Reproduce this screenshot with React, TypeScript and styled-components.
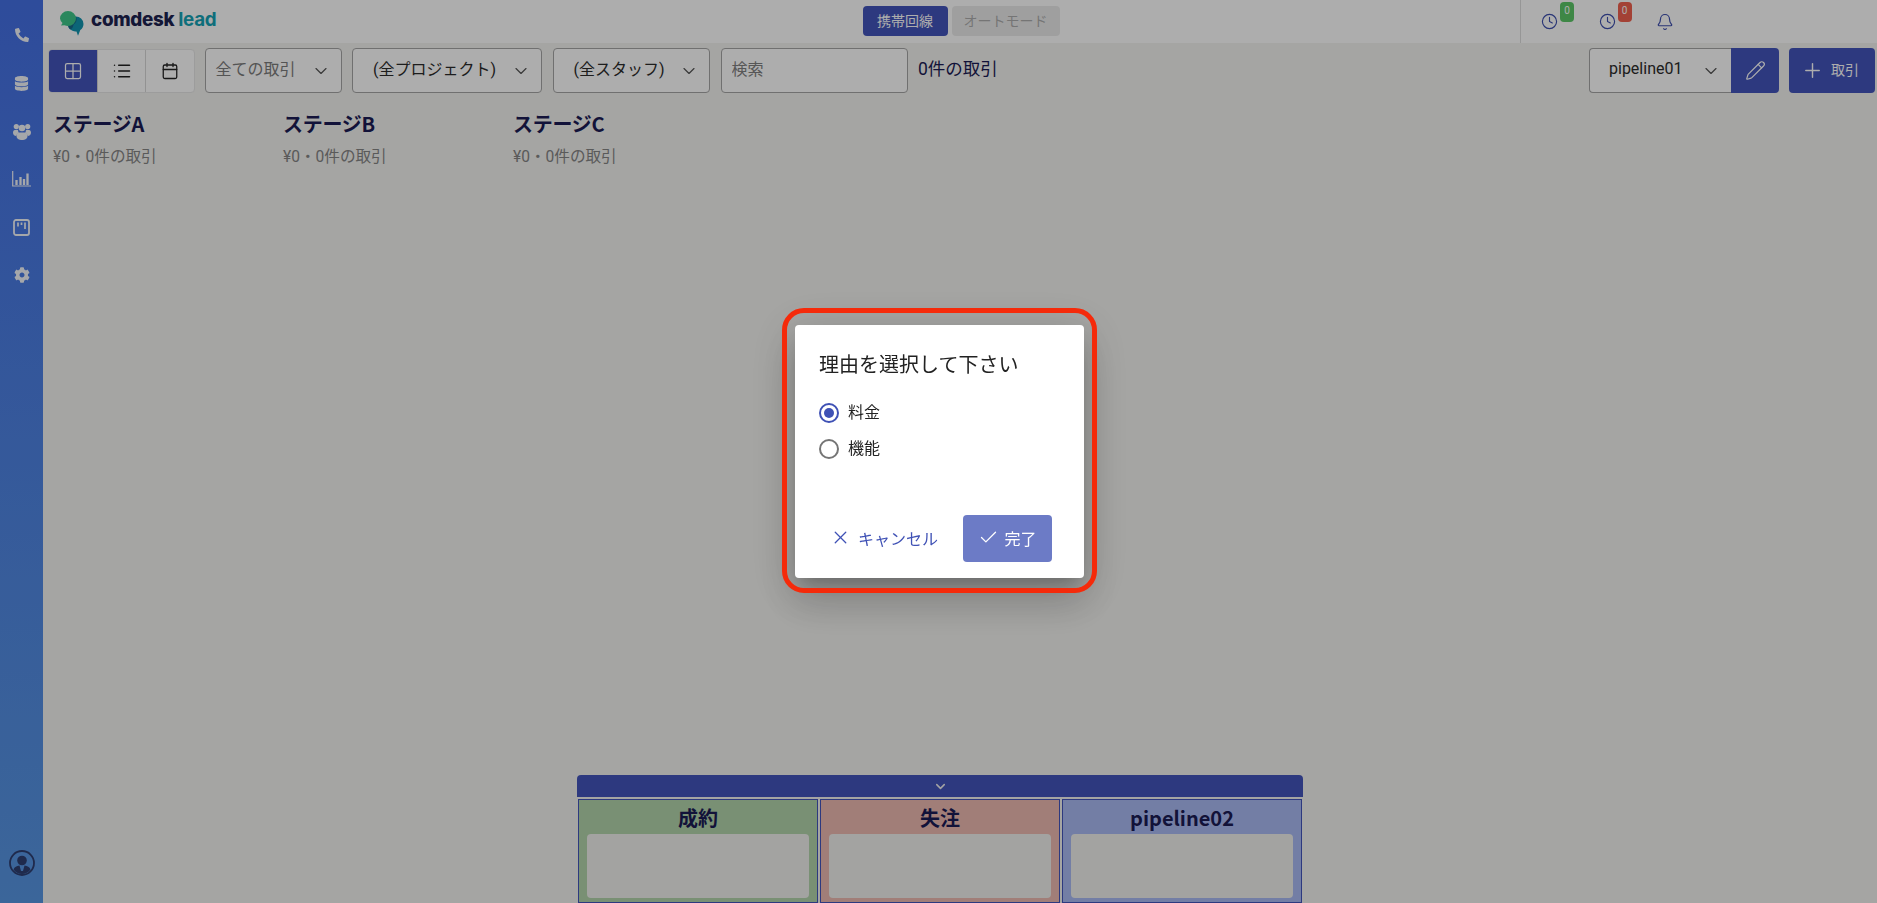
import styled, { createGlobalStyle } from "styled-components";
import { FaPhoneAlt, FaDatabase, FaCog } from "react-icons/fa";
import { Bell, Calendar, Check, ChevronDown, Clock, Grid2x2, List, Pencil, Plus, X } from "lucide-react";

const PRIMARY = "#4355bb";

const stages = ["ステージA", "ステージB", "ステージC"];

const docks = [
    { title: "成約", color: "#b3d4ac" },
    { title: "失注", color: "#edbab2" },
    { title: "pipeline02", color: "#aabaf4" },
];

function Logo() {
    return (
        <svg width="24" height="25" viewBox="0 0 24 25">
            <path d="M15.500 5.500a7.500 7.500 0 0 1 8 7.500c0 2.600-1.200 4.700-3.200 6L18 24.800 16.500 20.400a7.500 7.500 0 0 1-8.500-6z" fill="#1295b0" />
            <path d="M13.500 13.500c2.500-1.500 3.500-3.500 3-7l-2-1.500L8 14.400c.3 1.600 1 3 2.100 4.100 2.400-.6 3.200-2.800 3.400-5z" fill="#176a8a" />
            <path d="M8 0a8 7.500 0 0 1 8 7.500A8 7.500 0 0 1 8 15a8.500 8.500 0 0 1-3.500-.8L1 14.500l1.500-2.500A7.300 7.300 0 0 1 0 7.500 8 7.500 0 0 1 8 0z" fill="#3fc889" />
        </svg>
    );
}

function UsersIcon() {
    return (
        <svg width="18" height="17" viewBox="0 0 18 17" fill="currentColor">
            <circle cx="3.300" cy="3.500" r="2.600" />
            <circle cx="14.700" cy="3.500" r="2.600" />
            <circle cx="9" cy="5" r="3.300" />
            <path d="M0 9.500C0 7.500 1.500 6.800 3.300 6.800c.7 0 1.300.1 1.800.4a4.800 4.800 0 0 0 .8 2.700C4.300 10.500 3.400 11.700 3.300 13 1.300 12.800 0 12 0 9.500zM18 9.500c0-2-1.500-2.700-3.300-2.700-.7 0-1.300.1-1.800.4a4.800 4.800 0 0 1-.8 2.700c1.600.6 2.500 1.800 2.600 3.100 2-.2 3.300-1 3.300-3.500z" />
            <path d="M6.500 9.500h5c2 0 3 1.300 3 3.500 0 2.800-2.500 4-5.500 4s-5.500-1.200-5.500-4c0-2.200 1-3.500 3-3.500z" />
        </svg>
    );
}

function ChartIcon() {
    return (
        <svg width="19" height="16" viewBox="0 0 19 16" fill="none" stroke="currentColor">
            <path d="M.7 0v15h18.300" strokeWidth="1.200" />
            <path d="M4.500 9v5M8.500 6v8M12 8v6M15.500 2.500V14" strokeWidth="2.300" />
        </svg>
    );
}

function KanbanIcon() {
    return (
        <svg width="17" height="17" viewBox="0 0 17 17" fill="none" stroke="currentColor">
            <rect x="1" y="1" width="15" height="15" rx="2" strokeWidth="1.800" />
            <path d="M5 3.500v4M8.500 3.500v2.500M12 3.500v6.500" strokeWidth="1.700" />
        </svg>
    );
}

function AvatarIcon() {
    return (
        <svg width="26" height="26" viewBox="0 0 26 26" fill="none">
            <circle cx="13" cy="13" r="12" stroke="#2f3e70" strokeWidth="1.800" />
            <circle cx="13" cy="10.500" r="4.800" fill="#2f3e70" />
            <path d="M4.500 19.500c1-2.500 3-3.700 6-4l1.500 5.500h2l1.500-5.500c3 .3 5 1.500 6 4-2 2.800-5 4.500-8.500 4.500s-6.500-1.700-8.500-4.500z" fill="#2f3e70" />
        </svg>
    );
}

function App() {
    return (
        <Page>
            <GlobalStyle />
            <Sidebar>
                <NavItem><FaPhoneAlt size={14} /></NavItem>
                <NavItem><FaDatabase size={15} /></NavItem>
                <NavItem><UsersIcon /></NavItem>
                <NavItem><ChartIcon /></NavItem>
                <NavItem><KanbanIcon /></NavItem>
                <NavItem><FaCog size={16} /></NavItem>
                <AvatarSlot><AvatarIcon /></AvatarSlot>
            </Sidebar>
            <Main>
                <Header>
                    <Brand>
                        <Logo />
                        <BrandName>comdesk<BrandAccent>lead</BrandAccent></BrandName>
                    </Brand>
                    <Pills>
                        <Pill $active>携帯回線</Pill>
                        <Pill>オートモード</Pill>
                    </Pills>
                    <Notices>
                        <Notice>
                            <Clock size={17} strokeWidth={1.6} />
                            <Badge $color="#5cc868">0</Badge>
                        </Notice>
                        <Notice>
                            <Clock size={17} strokeWidth={1.6} />
                            <Badge $color="#f0604f">0</Badge>
                        </Notice>
                        <Notice>
                            <Bell size={18} strokeWidth={1.6} />
                        </Notice>
                    </Notices>
                </Header>
                <Toolbar>
                    <ViewGroup>
                        <ViewButton $active><Grid2x2 size={20} strokeWidth={1.5} /></ViewButton>
                        <ViewButton><List size={20} strokeWidth={1.8} /></ViewButton>
                        <ViewButton><Calendar size={18} strokeWidth={1.7} /></ViewButton>
                    </ViewGroup>
                    <Select $width={137} $pad={10} $muted>
                        全ての取引
                        <ChevronDown size={20} strokeWidth={1.4} />
                    </Select>
                    <Select $width={190} $pad={20}>
                        (全プロジェクト)
                        <ChevronDown size={20} strokeWidth={1.4} />
                    </Select>
                    <Select $width={157.500} $pad={20}>
                        (全スタッフ)
                        <ChevronDown size={20} strokeWidth={1.4} />
                    </Select>
                    <Search placeholder="検索" />
                    <DealCount>0件の取引</DealCount>
                    <ToolbarRight>
                        <PipelineGroup>
                            <PipelineSelect $width={142} $pad={19}>
                                pipeline01
                                <ChevronDown size={20} strokeWidth={1.4} />
                            </PipelineSelect>
                            <EditButton><Pencil size={21} strokeWidth={1.4} /></EditButton>
                        </PipelineGroup>
                        <AddButton>
                            <Plus size={23} strokeWidth={1.5} />
                            <AddLabel>取引</AddLabel>
                        </AddButton>
                    </ToolbarRight>
                </Toolbar>
                <Board>
                    {stages.map((stage) => {
                        return (
                            <Stage key={stage}>
                                <StageTitle>{stage}</StageTitle>
                                <StageInfo>¥0・0件の取引</StageInfo>
                            </Stage>
                        )
                    })}
                </Board>
                <Dock>
                    <DockBar><ChevronDown size={15} strokeWidth={2.4} /></DockBar>
                    <DockColumns>
                        {docks.map((item) => {
                            return (
                                <DockColumn key={item.title} $color={item.color}>
                                    <DockTitle>{item.title}</DockTitle>
                                    <DropArea />
                                </DockColumn>
                            )
                        })}
                    </DockColumns>
                </Dock>
            </Main>
            <Backdrop>
                <Modal>
                    <Highlight />
                    <ModalTitle>理由を選択して下さい</ModalTitle>
                    <RadioRow>
                        <Radio $checked />
                        <RadioLabel>料金</RadioLabel>
                    </RadioRow>
                    <RadioRow>
                        <Radio />
                        <RadioLabel>機能</RadioLabel>
                    </RadioRow>
                    <ModalActions>
                        <CancelButton>
                            <X size={21} strokeWidth={1.5} />
                            キャンセル
                        </CancelButton>
                        <DoneButton>
                            <Check size={21} strokeWidth={1.5} />
                            完了
                        </DoneButton>
                    </ModalActions>
                </Modal>
            </Backdrop>
        </Page>
    )
}

export default App;

const GlobalStyle = createGlobalStyle`
    html, body {
        margin: 0;
        padding: 0;
    }
    body {
        font-family: Roboto, "Noto Sans CJK JP", sans-serif;
        color: #1b1b55;
    }
    * {
        box-sizing: border-box;
    }
`

const Page = styled.div`
    display: flex;
    height: 100vh;
    overflow: hidden;
    background: #f3f3f0;
`

const Sidebar = styled.nav`
    display: flex;
    flex-direction: column;
    flex: 0 0 43px;
    padding: 11px 0 27px;
    background: linear-gradient(180deg, #4570e5 0%, #5897e4 100%);
`

const NavItem = styled.div`
    display: flex;
    align-items: center;
    justify-content: center;
    height: 48px;
    color: #f4f6fb;
`

const AvatarSlot = styled.div`
    display: flex;
    justify-content: center;
    margin-top: auto;
`

const Main = styled.main`
    display: flex;
    flex-direction: column;
    flex: 1;
    min-width: 0;
`

const Header = styled.header`
    display: grid;
    grid-template-columns: 1fr auto 1fr;
    align-items: center;
    flex: 0 0 43px;
    background: #fff;
`

const Brand = styled.div`
    display: flex;
    align-items: center;
    gap: 7px;
    padding: 3px 0 0 17px;
`

const BrandName = styled.span`
    display: flex;
    gap: 4px;
    margin-top: -7px;
    font-family: Inter, sans-serif;
    font-size: 18.800px;
    font-weight: 800;
    letter-spacing: -0.3px;
    color: #1c2250;
`

const BrandAccent = styled.span`
    font-weight: 700;
    color: #15a3b5;
`

const Pills = styled.div`
    display: flex;
    gap: 4px;
    margin: -2px 0 0 2px;
`

const Pill = styled.div<{ $active?: boolean }>`
    display: flex;
    align-items: center;
    justify-content: center;
    width: ${(p) => (p.$active ? "85px" : "108px")};
    height: 30px;
    padding-bottom: 1px;
    border-radius: 4px;
    font-size: 14px;
    background: ${(p) => (p.$active ? PRIMARY : "#ebebeb")};
    color: ${(p) => (p.$active ? "#fff" : "#adadad")};
`

const Notices = styled.div`
    display: flex;
    justify-self: end;
    align-items: center;
    gap: 40.5px;
    width: 357px;
    height: 100%;
    padding-left: 20px;
    border-left: 1px solid #ddd;
`

const Notice = styled.div`
    position: relative;
    display: flex;
    color: #3d4eae;
`

const Badge = styled.span<{ $color: string }>`
    position: absolute;
    top: -11px;
    left: 19px;
    width: 14px;
    height: 20px;
    border-radius: 4px;
    font-size: 10px;
    line-height: 18px;
    text-align: center;
    color: #fff;
    background: ${(p) => p.$color};
`

const Toolbar = styled.div`
    display: flex;
    align-items: center;
    gap: 10.5px;
    padding: 5px 2px 0 5px;
`

const ViewGroup = styled.div`
    display: flex;
    width: 147px;
    height: 44px;
    margin-right: -1px;
    overflow: hidden;
    border-radius: 4px;
    border: 1px solid #e6e6e6;
    background: #fff;
`

const ViewButton = styled.div<{ $active?: boolean }>`
    display: flex;
    flex: 1;
    align-items: center;
    justify-content: center;
    border-left: 1px solid #d8d8d8;
    background: ${(p) => (p.$active ? PRIMARY : "transparent")};
    color: ${(p) => (p.$active ? "#fff" : "#222")};
    &:first-child {
        border-left: none;
    }
`

const Select = styled.div<{ $width: number; $pad: number; $muted?: boolean }>`
    display: flex;
    align-items: center;
    justify-content: space-between;
    width: ${(p) => p.$width}px;
    height: 45px;
    padding: 0 10px 5px ${(p) => p.$pad}px;
    border: 1px solid #a5a5a5;
    border-radius: 4px;
    font-size: 16px;
    background: #fff;
    color: ${(p) => (p.$muted ? "#7c7c7c" : "#2c2c2c")};
    svg {
        margin-top: 5px;
        color: #555;
    }
`

const Search = styled.input`
    width: 187px;
    height: 45px;
    padding: 0 10px 2px;
    border: 1px solid #a5a5a5;
    border-radius: 4px;
    outline: none;
    font: inherit;
    font-size: 16px;
    background: #fff;
    &::placeholder {
        color: #808080;
    }
`

const DealCount = styled.span`
    margin-top: -6px;
    font-size: 17.500px;
`

const ToolbarRight = styled.div`
    display: flex;
    gap: 10px;
    margin-left: auto;
`

const PipelineGroup = styled.div`
    display: flex;
`

const PipelineSelect = styled(Select)`
    border-radius: 4px 0 0 4px;
    border-right: none;
`

const EditButton = styled.div`
    display: flex;
    align-items: center;
    justify-content: center;
    width: 48px;
    height: 45px;
    border-radius: 0 4px 4px 0;
    color: #fff;
    background: ${PRIMARY};
`

const AddButton = styled.div`
    display: flex;
    align-items: center;
    justify-content: center;
    gap: 7px;
    width: 86px;
    height: 45px;
    padding-right: 4px;
    border-radius: 4px;
    font-size: 14px;
    color: #fff;
    background: ${PRIMARY};
`

const AddLabel = styled.span`
    margin-top: -3px;
`

const Board = styled.section`
    display: flex;
    flex: 1;
    padding: 17px 0 0 10px;
`

const Stage = styled.div`
    width: 230px;
`

const StageTitle = styled.h2`
    margin: 0 0 9px;
    font-family: "Noto Sans CJK JP", sans-serif;
    font-size: 20px;
    font-weight: 700;
    letter-spacing: -0.3px;
    line-height: 28px;
`

const StageInfo = styled.p`
    margin: 0;
    font-size: 15.600px;
    line-height: 20px;
    color: #858585;
`

const Dock = styled.section`
    flex: 0 0 126px;
    width: 726px;
    margin-left: 534px;
`

const DockBar = styled.div`
    display: flex;
    align-items: center;
    justify-content: center;
    height: 22px;
    border-radius: 4px 4px 0 0;
    color: #f2f2f2;
    background: ${PRIMARY};
`

const DockColumns = styled.div`
    display: grid;
    grid-template-columns: repeat(3, 1fr);
    gap: 2px;
    height: 104px;
    margin-top: 2px;
    padding: 0 1px;
`

const DockColumn = styled.div<{ $color: string }>`
    padding: 0 8px;
    border: 1px solid ${PRIMARY};
    background: ${(p) => p.$color};
`

const DockTitle = styled.h3`
    margin: 0;
    height: 34px;
    font-family: "Noto Sans CJK JP", sans-serif;
    font-size: 20px;
    font-weight: 700;
    line-height: 36px;
    text-align: center;
`

const DropArea = styled.div`
    height: 64px;
    border-radius: 4px;
    background: #f0f0ed;
`

const Backdrop = styled.div`
    position: fixed;
    inset: 0;
    display: flex;
    align-items: center;
    justify-content: center;
    padding-left: 2px;
    background: rgba(0, 0, 0, 0.32);
`

const Modal = styled.div`
    position: relative;
    display: flex;
    flex-direction: column;
    width: 289px;
    height: 253px;
    padding: 26px 32px 16px 24px;
    border-radius: 4px;
    background: #fff;
    color: #222;
    box-shadow: 0 11px 15px -7px rgba(0, 0, 0, 0.2), 0 24px 38px 3px rgba(0, 0, 0, 0.14), 0 9px 46px 8px rgba(0, 0, 0, 0.12);
`

const Highlight = styled.div`
    position: absolute;
    inset: -17px -13px -15px;
    border: 5px solid #f52a0a;
    border-radius: 22px;
    pointer-events: none;
`

const ModalTitle = styled.h2`
    margin: 0 0 16px;
    font-size: 20px;
    font-weight: 400;
    line-height: 28px;
`

const RadioRow = styled.label`
    display: flex;
    align-items: center;
    gap: 9px;
    height: 36px;
    font-size: 16px;
`

const RadioLabel = styled.span`
    margin-top: -5px;
`

const Radio = styled.span<{ $checked?: boolean }>`
    position: relative;
    width: 20px;
    height: 20px;
    border: 2px solid ${(p) => (p.$checked ? "#3f51b5" : "#757575")};
    border-radius: 50%;
    &::after {
        content: "";
        position: absolute;
        inset: 3px;
        border-radius: 50%;
        background: ${(p) => (p.$checked ? "#3f51b5" : "transparent")};
    }
`

const ModalActions = styled.div`
    display: flex;
    justify-content: flex-end;
    align-items: center;
    gap: 25px;
    margin-top: auto;
`

const CancelButton = styled.div`
    display: flex;
    align-items: center;
    gap: 7px;
    padding-bottom: 2px;
    font-size: 16px;
    color: #3f51b5;
`

const DoneButton = styled.div`
    display: flex;
    align-items: center;
    justify-content: center;
    gap: 5px;
    width: 89px;
    height: 47px;
    padding-bottom: 2px;
    border-radius: 4px;
    font-size: 16px;
    color: #fff;
    background: #6c7bc6;
`
